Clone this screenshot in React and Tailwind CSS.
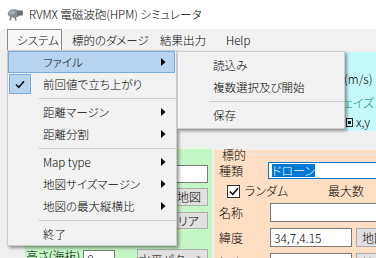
import React from 'react';

const Arrow = () => (
  <svg width="5" height="8" viewBox="0 0 5 8" className="ml-auto mr-[8px] shrink-0">
    <polygon points="0,0 4.5,4 0,8" fill="#000" />
  </svg>
);

const Check = () => (
  <svg width="10" height="9" viewBox="0 0 10 9">
    <path d="M1 4.5 L3.8 7.3 L9 1.2" fill="none" stroke="#111" strokeWidth="1.6" />
  </svg>
);

const Logo = () => (
  <svg width="17" height="13" viewBox="0 0 17 13">
    <ellipse cx="7" cy="5.5" rx="6.3" ry="4.3" fill="#8b9097" />
    <ellipse cx="5" cy="4.5" rx="3" ry="2" fill="#a9aeb4" />
    <rect x="10" y="2.5" width="6" height="5" rx="1" fill="#6c7179" />
    <path d="M4 9 L3 12.5 M8 9 L9 12.5" stroke="#787d84" strokeWidth="1.6" />
  </svg>
);

const Item = ({ label, arrow, checked, active }) => (
  <div
    className={`flex items-center h-[22px] mr-[1px] border ${
      active ? 'bg-[#b7d5f1] border-[#77abdb]' : 'border-transparent'
    }`}
  >
    {checked ? (
      <div className="flex items-center justify-center w-[22px] h-[20px] shrink-0 bg-[#b7d5f1] border border-[#77abdb]">
        <Check />
      </div>
    ) : (
      <div className="w-[22px] shrink-0" />
    )}
    <span className="ml-[12px] leading-[20px] whitespace-nowrap">{label}</span>
    {arrow && <Arrow />}
  </div>
);

const Sep = () => (
  <div className="flex items-center h-[6px]">
    <div className="ml-[31px] flex-1 h-px bg-[#c9c9c9]" />
  </div>
);

const Btn = ({ children, className }) => (
  <div
    className={`flex items-center justify-center shrink-0 bg-[#e1e1e1] border border-[#adadad] whitespace-nowrap leading-none ${className}`}
  >
    {children}
  </div>
);

export default function App() {
  return (
    <div className="relative w-[376px] h-[258px] overflow-hidden bg-[#f0f0f0] text-[12px] text-black font-light font-['Noto_Sans_CJK_JP',sans-serif] [font-feature-settings:'palt']">
      {/* title bar */}
      <div className="flex items-center h-[29px] bg-white pl-[7px]">
        <Logo />
        <span className="ml-[5px] text-[11.5px] leading-none whitespace-nowrap">RVMX 電磁波砲(HPM) シミュレータ</span>
      </div>

      {/* menu bar */}
      <div className="flex h-[21px] bg-[#f2f2f2] text-[11.5px]">
        <div className="ml-[7px] w-[55px] shrink-0 pl-[9px] pt-[1px] flex items-center border border-b-0 border-[#8a8a8a] bg-[#f8f8f8]">
          システム
        </div>
        <div className="w-[86px] shrink-0 pl-[10px] pt-[2px] flex items-center whitespace-nowrap">標的のダメージ</div>
        <div className="w-[68px] shrink-0 pl-[12px] pt-[2px] flex items-center">結果出力</div>
        <div className="w-[45px] shrink-0 pl-[10px] pt-[2px] flex items-center">Help</div>
      </div>

      {/* form underneath */}
      <div>
        <div className="flex justify-end h-[81px] pt-[2px]">
          <div className="w-[31px] bg-[#c6fafa] flex flex-col whitespace-nowrap leading-none">
            <span className="mt-[21px] -ml-[1px]">(m/s)</span>
            <span className="mt-[12px] -ml-[12px] text-[#0a8f95]">フェイズ</span>
            <div className="mt-[7px] flex items-center">
              <div className="ml-[1px] w-[7px] h-[9px] border border-[#222] flex items-center justify-center">
                <div className="w-[3px] h-[3px] bg-[#222]" />
              </div>
              <span className="ml-[3px]">x,y</span>
            </div>
          </div>
        </div>

        <div className="flex items-start mt-[17px]">
          {/* green panel */}
          <div className="ml-[25px] w-[187px] shrink-0 h-[130px] bg-[#c5f6c5] border-t border-[#e2fbe2] flex flex-col items-end pr-[4px] pt-[16px]">
            <div className="w-[90px] h-[18px] shrink-0 bg-white border border-[#7a7a7a]" />
            <Btn className="mt-[5px] w-[38px] h-[18px]">地図</Btn>
            <Btn className="mt-[6px] w-[50px] h-[17px]">クリア</Btn>
            <div className="mt-[19px] self-stretch flex items-start shrink-0">
              <span className="ml-[1px] leading-[16px] whitespace-nowrap">高さ(海抜)</span>
              <div className="ml-[3px] mt-[2px] w-[32px] h-[18px] shrink-0 bg-white border border-[#7a7a7a] pl-[3px] leading-[16px]">0</div>
              <Btn className="ml-auto mt-[1px] w-[71px] h-[22px]">水平パターン</Btn>
            </div>
          </div>

          {/* peach panel */}
          <div className="ml-[2px] mt-[2px] w-[170px] shrink-0 h-[130px] bg-[#ffdfc4] flex flex-col pl-[5px]">
            <div className="flex items-center h-[9px] shrink-0">
              <span className="ml-[3px] leading-none whitespace-nowrap">標的</span>
              <div className="ml-[3px] flex-1 h-px bg-[#ebebeb]" />
            </div>
            <div className="flex items-center h-[17px] shrink-0 mt-[3px]">
              <span className="w-[49px] shrink-0 leading-none">種類</span>
              <div className="w-[120px] h-[17px] shrink-0 bg-white border border-[#0078d7] flex items-center pl-[3px]">
                <span className="bg-[#0078d7] text-white leading-[13px]">ドローン</span>
              </div>
            </div>
            <div className="flex items-center h-[14px] shrink-0 mt-[5px]">
              <div className="ml-[8px] w-[13px] h-[13px] shrink-0 bg-white border border-[#333] flex items-center justify-center">
                <Check />
              </div>
              <span className="ml-[5px] w-[83px] shrink-0 leading-none">ランダム</span>
              <span className="leading-none whitespace-nowrap">最大数</span>
            </div>
            <div className="flex items-center h-[19px] shrink-0 mt-[5px]">
              <span className="w-[51px] shrink-0 leading-none">名称</span>
              <div className="w-[120px] h-[19px] shrink-0 bg-white border border-[#7a7a7a]" />
            </div>
            <div className="flex items-center h-[19px] shrink-0 mt-[6px]">
              <span className="w-[51px] shrink-0 leading-none">緯度</span>
              <div className="w-[82px] h-[19px] shrink-0 bg-white border border-[#7a7a7a] pl-[3px] leading-[17px]">34,7,4.15</div>
              <Btn className="ml-[4px] w-[38px] h-[19px] justify-start pl-[5px]">地図</Btn>
            </div>
            <div className="flex items-center h-[19px] shrink-0 mt-[6px]">
              <span className="w-[51px] shrink-0 leading-none">経度</span>
              <div className="w-[82px] h-[19px] shrink-0 bg-white border border-[#7a7a7a]" />
              <Btn className="ml-[4px] w-[38px] h-[19px] justify-start pl-[5px]">地図</Btn>
            </div>
          </div>
        </div>
      </div>

      {/* system menu dropdown */}
      <div className="absolute left-[7px] top-[50px] w-[170px] text-[11.5px] bg-[#f2f2f2] border border-[#cccccc] shadow-[2px_2px_3px_rgba(0,0,0,0.4)]">
        <Item label="ファイル" arrow active />
        <Item label="前回値で立ち上がり" checked />
        <Sep />
        <Item label="距離マージン" arrow />
        <Item label="距離分割" arrow />
        <Sep />
        <Item label="Map type" arrow />
        <Item label="地図サイズマージン" arrow />
        <Item label="地図の最大縦横比" arrow />
        <Sep />
        <Item label="終了" />
      </div>

      {/* file submenu */}
      <div className="absolute left-[177px] top-[51px] w-[168px] pt-[2px] pb-[2px] text-[11.5px] bg-[#f2f2f2] border border-[#cccccc] shadow-[2px_2px_3px_rgba(0,0,0,0.4)]">
        <Item label="読込み" />
        <Item label="複数選択及び開始" />
        <Sep />
        <Item label="保存" />
      </div>
    </div>
  );
}
